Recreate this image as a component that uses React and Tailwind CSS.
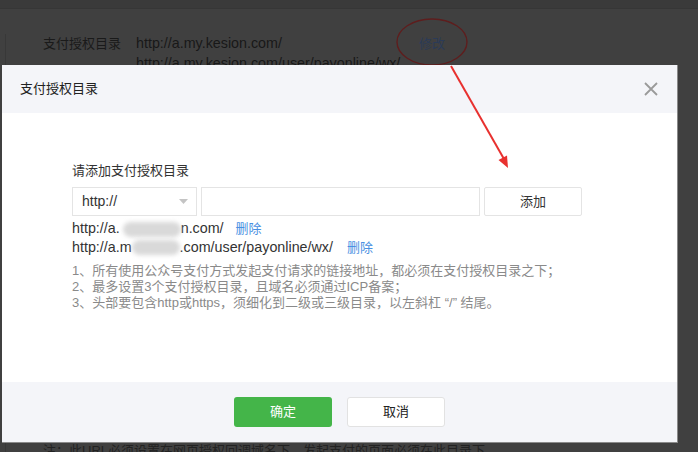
import React from "react";

const font = "font-['Liberation_Sans','Noto_Sans_CJK_SC',sans-serif]";

function Blur({ w }) {
  return (
    <span
      className="inline-block h-[15px] align-middle rounded-full bg-[#d9d9d9] blur-[2px]"
      style={{ width: w }}
    />
  );
}

export default function App() {
  return (
    <div className={`relative w-[698px] h-[452px] overflow-hidden bg-[#404040] ${font}`}>
      {/* dimmed page behind the dialog */}
      <div className="h-[9px] bg-[#3a3a3a] border-b border-[#363636]" />
      <div className="ml-[5px] h-[443px] border-l border-[#383838] bg-[#404040]">
        <div className="flex items-center h-[20px] mt-[25px]">
          <span className="w-[94px] pl-[37px] text-[13px] text-[#1a1a1a] whitespace-nowrap">支付授权目录</span>
          <span className="ml-[36px] w-[283px] text-[14.3px] text-[#181818]">http://a.my.kesion.com/</span>
          <span className="text-[13px] text-[#2b3b57]">修改</span>
        </div>
        <div className="pl-[130px] mt-[-1px] text-[14.3px] leading-[20px] text-[#181818]">
          http://a.my.kesion.com/user/payonline/wx/
        </div>
        <div className="pl-[37px] mt-[370px] text-[13px] leading-[16px] text-[#222]">
          注：此URL必须设置在网页授权回调域名下，发起支付的页面必须在此目录下
        </div>
      </div>

      <svg className="absolute left-0 top-0" width="698" height="100">
        <ellipse cx="432" cy="42" rx="35" ry="23" fill="none" stroke="#5e1d1d" strokeWidth="1.4" />
      </svg>

      {/* dialog */}
      <div className="absolute left-[2px] top-[65px] w-[676px] h-[378px] flex flex-col border-r border-b border-[#8a8a8a] bg-white">
        <div className="h-[48px] flex items-center justify-between bg-[#f4f5f9] pl-[18px] pr-[18px]">
          <span className="text-[13px] text-[#222]">支付授权目录</span>
          <svg width="16" height="16" viewBox="0 0 16 16">
            <path d="M2 2 L14 14 M14 2 L2 14" stroke="#9a9a9a" strokeWidth="1.8" />
          </svg>
        </div>

        <div className="flex-1 pl-[70px] pt-[48px]">
          <div className="text-[13px] leading-[20px] text-[#333]">请添加支付授权目录</div>
          <div className="flex gap-[4px] mt-[6px] h-[29px]">
            <div className="w-[125px] flex items-center justify-between border border-[#e4e4e4] pl-[9px] pr-[8px]">
              <span className="text-[14px] text-[#333]">http://</span>
              <svg width="9" height="5" viewBox="0 0 9 5">
                <path d="M0 0 L9 0 L4.5 5 Z" fill="#c4c4c4" />
              </svg>
            </div>
            <div className="w-[279px] border border-[#e4e4e4]" />
            <div className="w-[98px] flex items-center justify-center border border-[#e4e4e4] rounded-[2px] text-[13px] text-[#333]">
              添加
            </div>
          </div>
          <div className="mt-[3px] leading-[19px] text-[#333]">
            <div className="flex items-center h-[19px]">
              <span className="text-[14.3px]">http://a.</span>
              <span className="ml-[3px]"><Blur w={58} /></span>
              <span className="text-[14.3px]">n.com/</span>
              <span className="ml-[12px] text-[13px] text-[#4a90e2]">删除</span>
            </div>
            <div className="flex items-center h-[19px]">
              <span className="text-[14.3px]">http://a.m</span>
              <Blur w={48} />
              <span className="text-[14.3px]">.com/user/payonline/wx/</span>
              <span className="ml-[14px] text-[13px] text-[#4a90e2]">删除</span>
            </div>
          </div>
          <div className="mt-[6px] text-[13px] leading-[16px] text-[#8a8a8a]">
            <div>1、所有使用公众号支付方式发起支付请求的链接地址，都必须在支付授权目录之下；</div>
            <div>2、最多设置3个支付授权目录，且域名必须通过ICP备案；</div>
            <div>3、头部要包含http或https，须细化到二级或三级目录，以左斜杠 “/” 结尾。</div>
          </div>
        </div>

        <div className="h-[60px] flex items-center justify-center gap-[15px] bg-[#f4f5f9] pb-[1px]">
          <button className="w-[98px] h-[30px] rounded-[3px] bg-[#44b549] text-[13px] text-white">确定</button>
          <button className="w-[98px] h-[30px] rounded-[3px] bg-white border border-[#e2e2e2] text-[13px] text-[#222]">取消</button>
        </div>
      </div>

      {/* annotation arrow */}
      <svg className="absolute left-0 top-0" width="698" height="200">
        <line x1="451" y1="66" x2="504" y2="159" stroke="#e8312f" strokeWidth="2" />
        <path d="M508 168 L498.5 160 L507 155.5 Z" fill="#e8312f" />
      </svg>
    </div>
  );
}
